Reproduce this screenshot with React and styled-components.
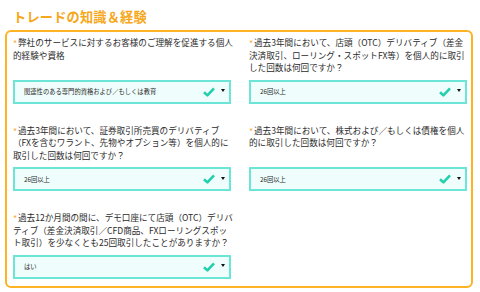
import React from "react";
import styled, { createGlobalStyle } from "styled-components";

const questions = [
  {
    lines: ["弊社のサービスに対するお客様のご理解を促進する個人", "的経験や資格"],
    value: "関連性のある専門的資格および／もしくは教育",
  },
  {
    lines: [
      "過去3年間において、店頭（OTC）デリバティブ（差金",
      "決済取引、ローリング・スポットFX等）を個人的に取引",
      "した回数は何回ですか？",
    ],
    value: "26回以上",
  },
  {
    lines: [
      "過去3年間において、証券取引所売買のデリバティブ",
      "（FXを含むワラント、先物やオプション等）を個人的に",
      "取引した回数は何回ですか？",
    ],
    value: "26回以上",
  },
  {
    lines: ["過去3年間において、株式および／もしくは債権を個人", "的に取引した回数は何回ですか？"],
    value: "26回以上",
  },
  {
    lines: [
      "過去12か月間の間に、デモ口座にて店頭（OTC）デリバ",
      "ティブ（差金決済取引／CFD商品、FXローリングスポッ",
      "ト取引）を少なくとも25回取引したことがありますか？",
    ],
    value: "はい",
  },
];

export default function App() {
  return (
    <>
      <GlobalStyle />
      <Page>
        <Title>トレードの知識＆経験</Title>
        <Panel>
          {questions.map((q, i) => (
            <Field key={i}>
              <Question>
                <Star>*</Star>
                {q.lines.map((line, j) => (
                  <React.Fragment key={j}>
                    {j > 0 && <br />}
                    {line}
                  </React.Fragment>
                ))}
              </Question>
              <Select>
                <SelectText>{q.value}</SelectText>
                <Check width="12" height="10" viewBox="0 0 12 10">
                  <path d="M1 5.2 L4.4 8.4 L11 1.4" fill="none" stroke="#24cfae" strokeWidth="2.6" strokeLinejoin="round" />
                </Check>
                <Caret width="4" height="3" viewBox="0 0 4 3">
                  <path d="M0 0 H4 L2 3 Z" fill="#111" />
                </Caret>
              </Select>
            </Field>
          ))}
        </Panel>
      </Page>
    </>
  );
}

// Style
const GlobalStyle = createGlobalStyle`
  body {
    margin: 0;
    background: #fff;
    font-family: "Noto Sans CJK JP", "Noto Sans", sans-serif;
  }
`;

const Page = styled.div`
  width: 480px;
  height: 292px;
  padding: 8px 7px 0 5px;
  box-sizing: border-box;
`;

const Title = styled.h2`
  margin: 0 0 5px 8px;
  font-size: 13.2px;
  line-height: 17px;
  font-weight: 700;
  letter-spacing: 0.2px;
  color: #f6a81c;
`;

const Panel = styled.div`
  display: grid;
  grid-template-columns: 218px 218px;
  column-gap: 18px;
  row-gap: 20px;
  padding: 4px 4px 4px 6px;
  border: 2px solid #fdb324;
  border-radius: 6px;
  height: 258px;
  box-sizing: border-box;
  align-content: start;
`;

const Field = styled.div`
  display: flex;
  flex-direction: column;
  justify-content: space-between;
  gap: 6px;
`;

const Question = styled.p`
  margin: 0;
  font-size: 8.6px;
  line-height: 12.5px;
  color: #2b2b2b;
  white-space: nowrap;
`;

const Star = styled.span`
  display: inline-block;
  width: 5px;
  color: #f7ae3a;
  font-size: 9px;
  line-height: 0;
  vertical-align: -1px;
`;

const Select = styled.div`
  display: flex;
  align-items: center;
  height: 24px;
  box-sizing: border-box;
  padding: 0 4px 0 9px;
  border: 2px solid #6be6d6;
  background: #effefc;
`;

const SelectText = styled.span`
  flex: 1;
  font-size: 6.3px;
  color: #2b2b2b;
`;

const Check = styled.svg`
  margin-right: 6px;
`;

const Caret = styled.svg`
  margin-top: -2px;
`;
